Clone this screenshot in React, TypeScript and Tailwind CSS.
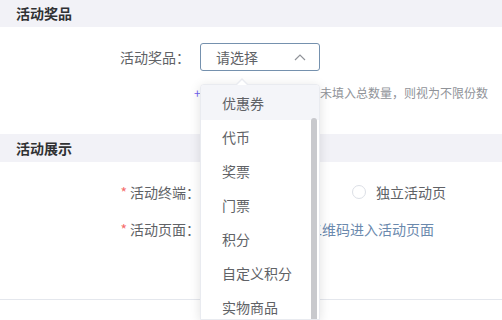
export default function App() {
  const options = ["代币", "奖票", "门票", "积分", "自定义积分", "实物商品"];

  return (
    <div className="relative w-[502px] h-[320px] overflow-hidden bg-white text-[14px] text-[#606266] [font-family:'Noto_Sans_CJK_SC',sans-serif]">
      <div className="h-[27px] bg-[#f2f2f7] pl-4 flex items-center font-bold text-[#303133]">活动奖品</div>

      <div className="mt-[16px] flex items-center h-[28px]">
        <label className="w-[190px] text-right">活动奖品：</label>
        <div className="relative ml-[10px]">
          <div className="w-[120px] h-[28px] border border-[#7591ae] rounded-[3px] pl-[15px] pr-[13px] flex items-center justify-between">
            <span>请选择</span>
            <svg width="12" height="7" viewBox="0 0 12 7" fill="none">
              <polyline points="1,6 6,1 11,6" stroke="#909399" strokeWidth="1.2" />
            </svg>
          </div>

          {/* dropdown */}
          <div className="absolute z-10 left-0 top-[41px] w-[120px] h-[236px] overflow-hidden bg-white border border-[#e9ebf0] rounded-t-[4px] shadow-[0_2px_12px_0_rgba(0,0,0,0.12)]">
            <ul>
              <li className="h-[35px] pt-[1px] pl-[21px] flex items-center bg-[#f4f5f9]">优惠券</li>
              {options.map((o) => (
                <li key={o} className="h-[34px] pl-[21px] flex items-center">{o}</li>
              ))}
            </ul>
            <div className="absolute right-[2px] top-[33px] w-[6px] h-[240px] rounded-[3px] bg-[#c8c9cd]" />
          </div>
          <div className="absolute z-20 left-[36px] top-[35px] w-0 h-0 border-x-[6px] border-x-transparent border-b-[6px] border-b-[#e9ebf0]" />
          <div className="absolute z-20 left-[37px] top-[37px] w-0 h-0 border-x-[5px] border-x-transparent border-b-[5px] border-b-white" />
        </div>
      </div>

      <div className="mt-[12px] h-[20px] flex items-center text-[12px] text-[#909399] pl-[194px]">
        <span className="w-[126px] text-[#7064f0]">+ 添加奖品</span>
        <span>未填入总数量，则视为不限份数</span>
      </div>

      <div className="mt-[31px] h-[28px] bg-[#f2f2f7] pl-4 flex items-center font-bold text-[#303133]">活动展示</div>

      <div className="mt-[20px] h-[20px] flex items-center">
        <label className="w-[200px] text-right">
          <span className="text-[#f56c6c] mr-[3px]">*</span>活动终端：
        </label>
        <div className="ml-[10px] flex items-center">
          <span className="w-[14px] h-[14px] rounded-full border-[4px] border-[#409eff]" />
          <span className="pl-[10px] text-[#409eff]">小程序活动页</span>
        </div>
        <div className="ml-[34px] flex items-center">
          <span className="w-[14px] h-[14px] rounded-full border border-[#dcdfe6] bg-white" />
          <span className="pl-[10px]">独立活动页</span>
        </div>
      </div>

      <div className="mt-[17px] h-[20px] flex items-center">
        <label className="w-[200px] text-right">
          <span className="text-[#f56c6c] mr-[3px]">*</span>活动页面：
        </label>
        <span className="ml-[10px] text-[#6b89ad]">通过扫描小程序二维码进入活动页面</span>
      </div>

      <div className="mt-[60px] border-t border-[#e4e7ed]" />
    </div>
  );
}
